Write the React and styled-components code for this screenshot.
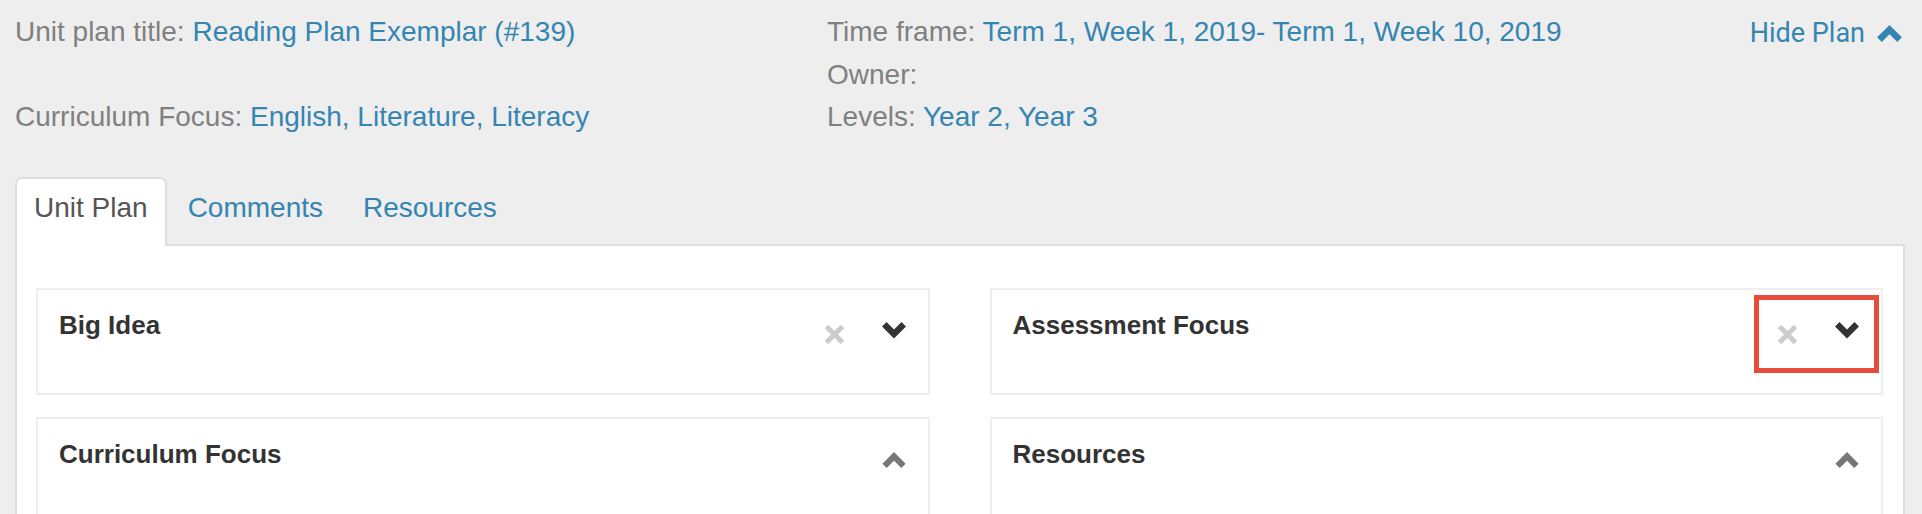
import React from "react";
import styled, { createGlobalStyle } from "styled-components";

const GlobalStyle = createGlobalStyle`
    body {
        margin: 0;
        background: #eeeeee;
        font-family: "Liberation Sans", Arial, sans-serif;
    }
`;

const planInfo = {
    left: [
        { label: "Unit plan title:", value: "Reading Plan Exemplar (#139)" },
        { label: "", value: "" },
        { label: "Curriculum Focus:", value: "English, Literature, Literacy" },
    ],
    right: [
        { label: "Time frame:", value: "Term 1, Week 1, 2019- Term 1, Week 10, 2019" },
        { label: "Owner:", value: "" },
        { label: "Levels:", value: "Year 2, Year 3" },
    ],
};

const sections = [
    { title: "Big Idea", open: true, removable: true },
    { title: "Assessment Focus", open: true, removable: true, highlight: true },
    { title: "Curriculum Focus", open: false },
    { title: "Resources", open: false },
];

function ChevronDown() {
    return (
        <svg width="24" height="17" viewBox="0 0 24 17">
            <polygon points="0,4.5 4.5,0 12,7.5 19.5,0 24,4.5 12,16.5" fill="#333" />
        </svg>
    );
}

function ChevronUp({ color = "#777", width = 24, height = 16 }) {
    return (
        <svg width={width} height={height} viewBox="0 0 24 16.5">
            <polygon points="0,12 12,0 24,12 19.5,16.5 12,9 4.5,16.5" fill={color} />
        </svg>
    );
}

function Cross() {
    return (
        <svg width="21" height="21" viewBox="0 0 21 21">
            <path d="M2.5 2.5 L18.5 18.5 M18.5 2.5 L2.5 18.5" stroke="#cccccc" strokeWidth="5" />
        </svg>
    );
}

function InfoLine({ label, value }) {
    return (
        <Line>
            {label && <Label>{label} </Label>}
            {value && <Value>{value}</Value>}
        </Line>
    );
}

export default function App() {
    return (
        <Page>
            <GlobalStyle />
            <Header>
                <InfoColumn>
                    {planInfo.left.map((item, i) => (
                        <InfoLine key={i} {...item} />
                    ))}
                </InfoColumn>
                <InfoColumn>
                    {planInfo.right.map((item, i) => (
                        <InfoLine key={i} {...item} />
                    ))}
                </InfoColumn>
                <HideLink>
                    Hide Plan
                    <ChevronUp color="#3585b2" width={25} height={17} />
                </HideLink>
            </Header>

            <Tabs>
                <Tab $active>Unit Plan</Tab>
                <Tab>Comments</Tab>
                <Tab>Resources</Tab>
            </Tabs>

            <Panel>
                <CardGrid>
                    {sections.map((s) => (
                        <Card key={s.title}>
                            <CardTitle>{s.title}</CardTitle>
                            <CardTools>
                                {s.removable && (
                                    <ToolIcon $top={14}>
                                        <Cross />
                                    </ToolIcon>
                                )}
                                <ToolIcon $top={s.open ? 12 : 13}>
                                    {s.open ? <ChevronDown /> : <ChevronUp />}
                                </ToolIcon>
                            </CardTools>
                            {s.highlight && <Highlight />}
                        </Card>
                    ))}
                </CardGrid>
            </Panel>
        </Page>
    );
}

const Page = styled.div`
    padding: 0 17px 0 15px;
    min-height: 514px;
    box-sizing: border-box;
`;

const Header = styled.div`
    display: grid;
    grid-template-columns: 812px 1fr auto;
    padding-top: 11px;
    height: 177px;
    box-sizing: border-box;
`;

const InfoColumn = styled.div`
    display: flex;
    flex-direction: column;
`;

const Line = styled.div`
    font-size: 28px;
    line-height: 42.5px;
    height: 42.5px;
    white-space: nowrap;
`;

const Label = styled.span`
    color: #808080;
`;

const Value = styled.span`
    color: #3585b2;
`;

const HideLink = styled.div`
    display: flex;
    align-items: center;
    gap: 12px;
    height: 42px;
    margin-top: 1px;
    margin-right: 3px;
    font-family: Roboto, "Liberation Sans", sans-serif;
    font-size: 27px;
    color: #3585b2;
`;

const Tabs = styled.div`
    display: flex;
    position: relative;
    z-index: 1;
`;

const Tab = styled.div`
    font-size: 28px;
    line-height: 40px;
    padding: 9px 17px 18px;
    margin-right: 2px;
    margin-bottom: -2px;
    border: 2px solid ${({ $active }) => ($active ? "#dddddd" : "transparent")};
    border-bottom: none;
    border-radius: 7px 7px 0 0;
    background: ${({ $active }) => ($active ? "#ffffff" : "transparent")};
    color: ${({ $active }) => ($active ? "#555555" : "#3585b2")};
`;

const Panel = styled.div`
    background: #ffffff;
    border: 2px solid #dddddd;
    padding: 42px 20px 40px 19px;
`;

const CardGrid = styled.div`
    display: grid;
    grid-template-columns: 1fr 1fr;
    column-gap: 60px;
    row-gap: 22px;
`;

const Card = styled.div`
    position: relative;
    display: flex;
    justify-content: space-between;
    align-items: flex-start;
    height: 107px;
    box-sizing: border-box;
    border: 2px solid #eeeeee;
    padding: 20px 22px 0 21px;
`;

const CardTitle = styled.h4`
    margin: 0;
    font-size: 26px;
    line-height: 30px;
    font-weight: bold;
    color: #333333;
`;

const CardTools = styled.div`
    display: flex;
    gap: 37px;
`;

const ToolIcon = styled.span`
    display: block;
    margin-top: ${({ $top }) => $top}px;
    line-height: 0;
`;

const Highlight = styled.div`
    position: absolute;
    top: 5px;
    right: 2px;
    width: 125px;
    height: 78px;
    box-sizing: border-box;
    border: 5px solid #e74c3c;
`;
